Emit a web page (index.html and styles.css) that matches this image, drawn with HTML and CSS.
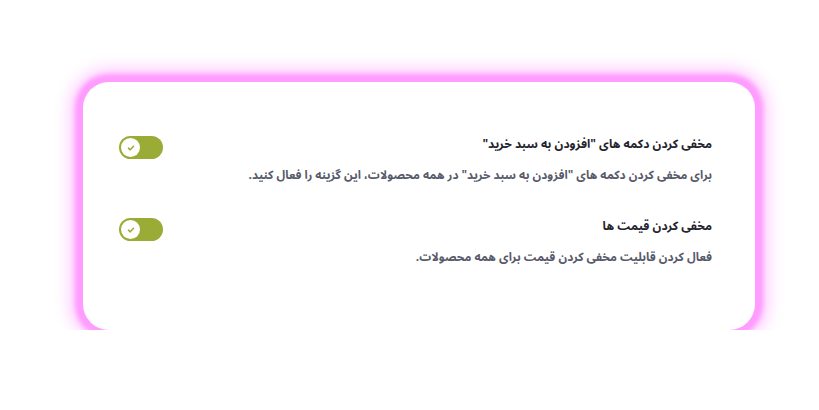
FILE: index.html
```html
<!DOCTYPE html>
<html lang="fa" dir="rtl">
<head>
<meta charset="utf-8">
<link rel="stylesheet" href="styles.css">
</head>
<body>
<div class="card">
  <div class="row">
    <div class="text">
      <div class="title">مخفی کردن دکمه های "افزودن به سبد خرید"</div>
      <div class="desc">برای مخفی کردن دکمه های "افزودن به سبد خرید" در همه محصولات، این گزینه را فعال کنید.</div>
    </div>
    <div class="toggle"><span class="knob"><svg viewBox="0 0 12 12" width="10" height="10"><path d="M3 6.2 L5.1 8.2 L9 4" fill="none" stroke="#9aab36" stroke-width="1.8" stroke-linecap="round" stroke-linejoin="round"/></svg></span></div>
  </div>
  <div class="row">
    <div class="text">
      <div class="title">مخفی کردن قیمت ها</div>
      <div class="desc">فعال کردن قابلیت مخفی کردن قیمت برای همه محصولات.</div>
    </div>
    <div class="toggle"><span class="knob"><svg viewBox="0 0 12 12" width="10" height="10"><path d="M3 6.2 L5.1 8.2 L9 4" fill="none" stroke="#9aab36" stroke-width="1.8" stroke-linecap="round" stroke-linejoin="round"/></svg></span></div>
  </div>
</div>
</body>
</html>
```
FILE: styles.css
```css
html, body {
  margin: 0;
  padding: 0;
  background: #ffffff;
}
body {
  font-family: "Noto Sans Arabic", "Noto Naskh Arabic", "DejaVu Sans", sans-serif;
  direction: rtl;
}
.card {
  box-sizing: border-box;
  width: 672px;
  height: 248px;
  margin: 82px 64px 0 auto;
  background: #fff;
  border-radius: 26px;
  box-shadow: 0 0 4px 8px #ff9cff, 0 0 16px 13px #ffc8ff;
  padding: 54px 43px 0 36px;
  display: flex;
  flex-direction: column;
  gap: 33px;
}
.row {
  display: flex;
  justify-content: space-between;
  align-items: flex-start;
}
.text {
  display: flex;
  flex-direction: column;
  gap: 13px;
}
.title {
  font-size: 12px;
  font-weight: bold;
  color: #24242e;
  line-height: 18px;
  white-space: nowrap;
}
.desc {
  font-size: 11.8px;
  font-weight: bold;
  color: #575a6a;
  line-height: 18px;
  white-space: nowrap;
}
.toggle {
  width: 44px;
  height: 23px;
  border-radius: 12px;
  background: #9aab36;
  display: flex;
  align-items: center;
  justify-content: flex-end;
  padding: 0 2px;
  box-sizing: border-box;
}
.knob {
  width: 19px;
  height: 19px;
  border-radius: 50%;
  background: #fff;
  display: flex;
  align-items: center;
  justify-content: center;
}
```
